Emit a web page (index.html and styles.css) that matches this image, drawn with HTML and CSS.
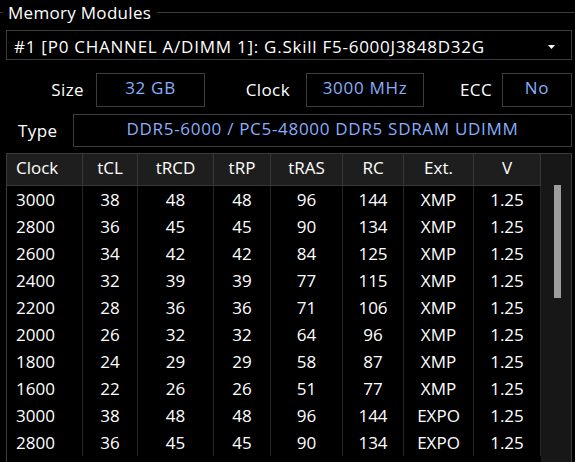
FILE: index.html
```html
<!DOCTYPE html>
<html>
<head>
<meta charset="utf-8">
<link rel="stylesheet" href="styles.css">
</head>
<body>
<div class="panel">
  <div class="group-title">
    <span class="dash"></span>
    <span class="title">Memory Modules</span>
    <span class="line"></span>
  </div>
  <div class="combo">
    <span class="combo-text">#1 [P0 CHANNEL A/DIMM 1]: G.Skill F5-6000J3848D32G</span>
    <svg class="arrow" width="7" height="4" viewBox="0 0 7 4"><polygon points="0,0 7,0 3.5,4" fill="#ffffff"/></svg>
  </div>
  <div class="info-row">
    <span class="label l-size">Size</span>
    <span class="value v-size">32 GB</span>
    <span class="label l-clock">Clock</span>
    <span class="value v-clock">3000 MHz</span>
    <span class="label l-ecc">ECC</span>
    <span class="value v-ecc">No</span>
  </div>
  <div class="type-row">
    <span class="label l-type">Type</span>
    <span class="value v-type">DDR5-6000 / PC5-48000 DDR5 SDRAM UDIMM</span>
  </div>
  <div class="table">
    <div class="grid">
      <div class="hc first">Clock</div><div class="hc">tCL</div><div class="hc">tRCD</div><div class="hc">tRP</div><div class="hc">tRAS</div><div class="hc">RC</div><div class="hc">Ext.</div><div class="hc">V</div>
      <div class="c first">3000</div><div class="c">38</div><div class="c">48</div><div class="c">48</div><div class="c">96</div><div class="c">144</div><div class="c">XMP</div><div class="c">1.25</div>
      <div class="c first">2800</div><div class="c">36</div><div class="c">45</div><div class="c">45</div><div class="c">90</div><div class="c">134</div><div class="c">XMP</div><div class="c">1.25</div>
      <div class="c first">2600</div><div class="c">34</div><div class="c">42</div><div class="c">42</div><div class="c">84</div><div class="c">125</div><div class="c">XMP</div><div class="c">1.25</div>
      <div class="c first">2400</div><div class="c">32</div><div class="c">39</div><div class="c">39</div><div class="c">77</div><div class="c">115</div><div class="c">XMP</div><div class="c">1.25</div>
      <div class="c first">2200</div><div class="c">28</div><div class="c">36</div><div class="c">36</div><div class="c">71</div><div class="c">106</div><div class="c">XMP</div><div class="c">1.25</div>
      <div class="c first">2000</div><div class="c">26</div><div class="c">32</div><div class="c">32</div><div class="c">64</div><div class="c">96</div><div class="c">XMP</div><div class="c">1.25</div>
      <div class="c first">1800</div><div class="c">24</div><div class="c">29</div><div class="c">29</div><div class="c">58</div><div class="c">87</div><div class="c">XMP</div><div class="c">1.25</div>
      <div class="c first">1600</div><div class="c">22</div><div class="c">26</div><div class="c">26</div><div class="c">51</div><div class="c">77</div><div class="c">XMP</div><div class="c">1.25</div>
      <div class="c first">3000</div><div class="c">38</div><div class="c">48</div><div class="c">48</div><div class="c">96</div><div class="c">144</div><div class="c">EXPO</div><div class="c">1.25</div>
      <div class="c first">2800</div><div class="c">36</div><div class="c">45</div><div class="c">45</div><div class="c">90</div><div class="c">134</div><div class="c">EXPO</div><div class="c">1.25</div>
    </div>
    <div class="scrollbar"><div class="thumb"></div></div>
  </div>
</div>
</body>
</html>
```
FILE: styles.css
```css
html, body {
  margin: 0;
  padding: 0;
  background: #000;
  overflow: hidden;
  width: 575px;
  height: 462px;
}
.panel {
  font-family: "Open Sans", "Noto Sans", sans-serif;
  font-size: 17px;
  font-weight: 500;
  color: #ffffff;
  display: flex;
  flex-direction: column;
}
.group-title {
  display: flex;
  align-items: flex-start;
  height: 26px;
}
.dash {
  width: 3px;
  height: 1px;
  background: #3a3a3a;
  margin-top: 12px;
}
.title {
  line-height: 26px;
  margin-left: 5px;
  white-space: nowrap;
  letter-spacing: 0.3px;
}
.line {
  flex: 1;
  height: 1px;
  background: #3a3a3a;
  margin-top: 12px;
  margin-left: 6px;
}
.combo {
  margin: 4px 0 0 6px;
  width: 566px;
  height: 30px;
  box-sizing: border-box;
  border: 1px solid #3c3c3c;
  padding: 2px 0 0 7px;
  line-height: 27px;
  display: flex;
  align-items: flex-start;
  white-space: nowrap;
}
.combo-text {
  flex: 1;
  letter-spacing: 0.75px;
}
.arrow {
  margin: 12px 16px 0 0;
}
.info-row {
  display: flex;
  margin: 13px 0 0 6px;
  height: 34px;
}
.label {
  text-align: right;
  white-space: nowrap;
  box-sizing: border-box;
  letter-spacing: 0.4px;
}
.value {
  box-sizing: border-box;
  border: 1px solid #3c3c3c;
  color: #88aefa;
  text-align: center;
  white-space: nowrap;
  letter-spacing: 0.7px;
}
.info-row .label {
  line-height: 34px;
}
.info-row .value {
  height: 34px;
  line-height: 28px;
  padding-bottom: 4px;
}
.l-size { width: 78px; margin-right: 12px; }
.v-size { width: 109px; }
.l-clock { width: 85px; margin-right: 16px; }
.v-clock { width: 118px; }
.l-ecc { width: 68px; margin-right: 10px; }
.v-ecc { width: 70px; }
.type-row {
  display: flex;
  margin: 7px 0 0 0;
  height: 33px;
}
.l-type {
  width: 73px;
  text-align: left;
  padding-left: 18px;
  line-height: 33px;
}
.v-type {
  width: 499px;
  height: 33px;
  line-height: 27px;
  padding-bottom: 4px;
}
.table {
  margin: 6px 0 0 6px;
  width: 566px;
  height: 330px;
  box-sizing: border-box;
  border: 1px solid #3b3b3b;
  display: flex;
  align-items: stretch;
}
.grid {
  display: grid;
  grid-template-columns: 76px 55px 76px 57px 72px 61px 70px 67px;
  grid-auto-rows: 27px;
  grid-template-rows: 32px;
  align-content: start;
  background: #000;
}
.hc {
  background: #1e1e1e;
  border-right: 1px solid #383838;
  border-bottom: 1px solid #383838;
  line-height: 27px;
  padding-bottom: 4px;
  text-align: center;
}
.c {
  border-right: 1px solid #262626;
  line-height: 27px;
  text-align: center;
}
.hc.first, .c.first {
  text-align: left;
  padding-left: 9px;
}
.scrollbar {
  flex: 1;
  background: #171717;
  display: flex;
  justify-content: center;
  padding-top: 31px;
  padding-left: 2px;
}
.thumb {
  width: 7px;
  height: 113px;
  background: #9d9d9d;
}
```
